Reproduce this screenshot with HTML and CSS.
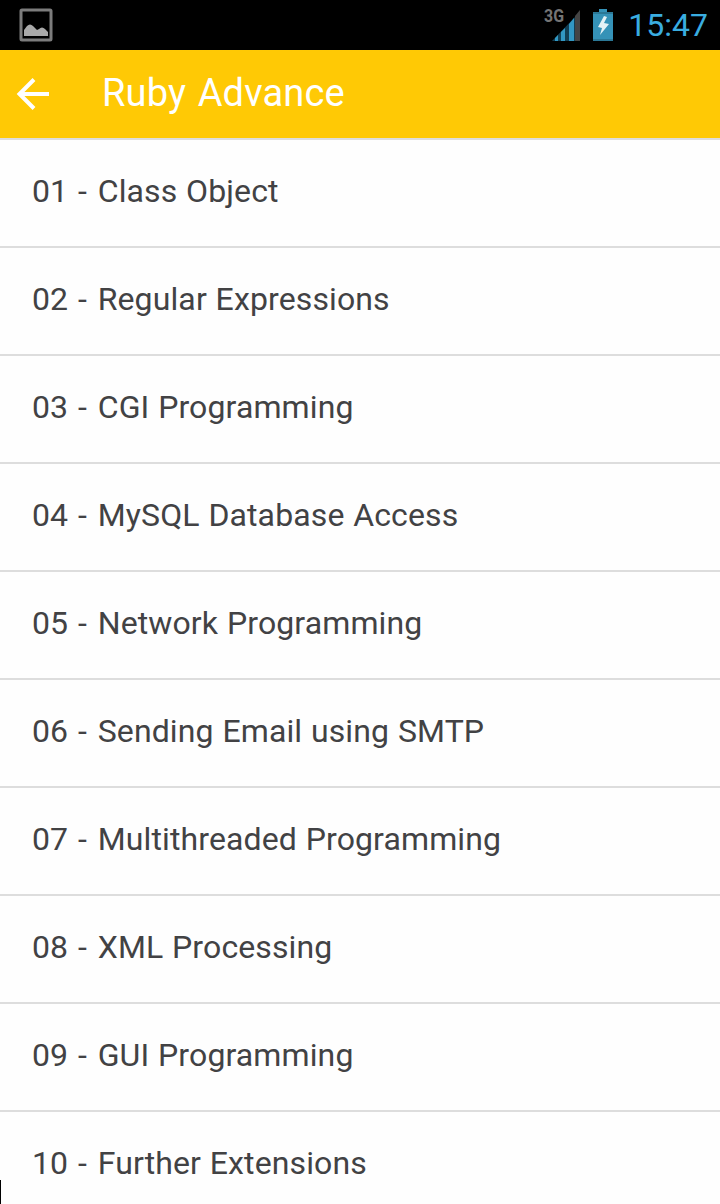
FILE: index.html
```html
<!DOCTYPE html>
<html lang="en">

<head>
  <meta charset="UTF-8" />
  <meta name="viewport" content="width=device-width, initial-scale=1.0" />
  <title>Ruby Advance</title>
  <link rel="stylesheet" href="styles.css">
</head>

<body>
  <div class="status-bar">
    <svg class="picture-icon" width="34" height="34" viewBox="0 0 34 34">
      <rect x="2" y="2" width="30" height="30" rx="1" fill="none" stroke="#7c7c7c" stroke-width="3" />
      <path d="M5 28V22L8 18Q11 15 14 18L18 22 20 21Q23 18 26 21L29 24V28z" fill="#a9a9a9" />
    </svg>
    <div class="status-right">
      <svg class="signal-icon" width="38" height="38" viewBox="0 0 38 38">
        <path d="M8 35L31 11V35z" fill="#123f54" />
        <path d="M11 35V32L14 29V35zM17 35V26L21 22V35zM25 35V18L30 12V35z" fill="#3297c2" />
        <path d="M31 35V10L36 4V35z" fill="#444" />
        <text x="0" y="16" class="network" textLength="20" lengthAdjust="spacingAndGlyphs">3G</text>
      </svg>
      <svg class="battery-icon" width="22" height="34" viewBox="0 0 22 34">
        <path d="M7 1h8v3h6v29H1V4h6z" fill="#3592b7" />
        <path d="M1 4h20v2H1zM1 31h20v2H1z" fill="#2b7896" />
        <path d="M12 8L6 19l4 1-2 7 9-11-5-1 3-6z" fill="#e4f2f6" />
      </svg>
      <span class="clock">15:47</span>
    </div>
  </div>

  <header class="app-bar">
    <svg class="back-icon" width="34" height="34" viewBox="0 0 34 34">
      <path d="M33 17H5M18 2.5L3.5 17l14.5 14.5" />
    </svg>
    <h1>Ruby Advance</h1>
  </header>

  <ul class="chapters">
    <li>01 <span class="dash">-</span> Class Object</li>
    <li>02 <span class="dash">-</span> Regular Expressions</li>
    <li>03 <span class="dash">-</span> CGI Programming</li>
    <li>04 <span class="dash">-</span> MySQL Database Access</li>
    <li>05 <span class="dash">-</span> Network Programming</li>
    <li>06 <span class="dash">-</span> Sending Email using SMTP</li>
    <li>07 <span class="dash">-</span> Multithreaded Programming</li>
    <li>08 <span class="dash">-</span> XML Processing</li>
    <li>09 <span class="dash">-</span> GUI Programming</li>
    <li>10 <span class="dash">-</span> Further Extensions</li>
  </ul>
  <div class="edge-mark"></div>
</body>

</html>
```
FILE: styles.css
```css
body {
  margin: 0;
  height: 1204px;
  overflow: hidden;
  position: relative;
  background-color: #fefefe;
  font-family: Roboto, sans-serif;
}

.status-bar {
  display: flex;
  align-items: center;
  justify-content: space-between;
  box-sizing: border-box;
  height: 50px;
  padding: 0 12px 0 19px;
  background-color: #000;
}

.status-right {
  display: flex;
  align-items: center;
}

.network {
  font-size: 18px;
  font-weight: 700;
  fill: #747474;
}

.battery-icon {
  margin: 0 14px 0 10px;
}

.clock {
  font-size: 32px;
  color: #3aade0;
}

.app-bar {
  display: flex;
  align-items: center;
  box-sizing: border-box;
  height: 90px;
  padding-left: 16px;
  background-color: #ffc905;
  border-bottom: 2px solid #ddd;
}

.back-icon {
  fill: none;
  stroke: #fff;
  stroke-width: 4;
}

.app-bar h1 {
  margin: 0 0 2px 52px;
  font-size: 38px;
  font-weight: 400;
  letter-spacing: 0.15px;
  word-spacing: 2px;
  color: #fff;
}

.chapters {
  margin: 0;
  padding: 0;
  list-style: none;
}

.chapters li {
  box-sizing: border-box;
  height: 108px;
  padding: 0 32px;
  border-bottom: 2px solid #ddd;
  font-size: 32px;
  line-height: 102px;
  letter-spacing: 0.12px;
  word-spacing: 0.7px;
  color: #424244;
}

.dash {
  padding: 0 2px 0 1px;
}

.edge-mark {
  position: absolute;
  left: 0;
  bottom: 0;
  width: 1px;
  height: 24px;
  background-color: #000;
}
```
